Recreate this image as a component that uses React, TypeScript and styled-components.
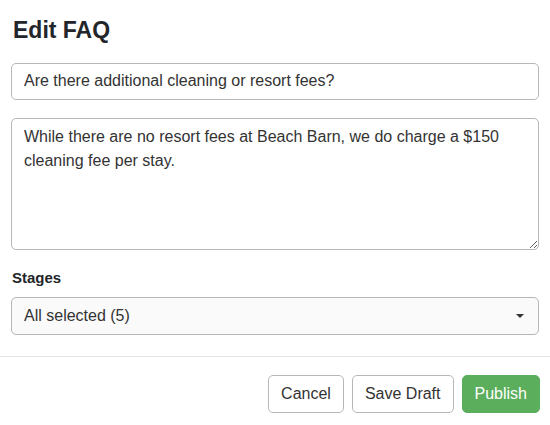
import styled, { createGlobalStyle } from "styled-components";

const GlobalStyle = createGlobalStyle`
    html, body {
        margin: 0;
        padding: 0;
        background: #ffffff;
        font-family: "Liberation Sans", Arial, sans-serif;
        color: #333333;
    }
    * {
        box-sizing: border-box;
    }
`

const Modal = styled.div`
    width: 550px;
    height: 425px;
    background: #ffffff;
    display: flex;
    flex-direction: column;
`

const Content = styled.div`
    padding: 17px 11px 0 11px;
    display: flex;
    flex-direction: column;
`

const Title = styled.h2`
    margin: 0 0 18px 2px;
    font-size: 23px;
    line-height: 1.2;
    font-weight: 700;
    color: #222529;
`

const TextInput = styled.input`
    width: 100%;
    height: 37px;
    padding: 0 12px;
    border: 1px solid #b3b8bd;
    border-radius: 5px;
    font-family: inherit;
    font-size: 16px;
    color: #333333;
    background: #ffffff;
    outline: none;
`

const TextArea = styled.textarea`
    width: 100%;
    height: 132px;
    margin-top: 18px;
    padding: 6px 12px;
    border: 1px solid #b3b8bd;
    border-radius: 5px;
    font-family: inherit;
    font-size: 16px;
    line-height: 24px;
    color: #333333;
    background: #ffffff;
    resize: vertical;
    outline: none;
`

const Label = styled.label`
    display: block;
    margin: 16px 0 0 1px;
    font-size: 15px;
    line-height: 24px;
    font-weight: 700;
    color: #222529;
`

const Select = styled.div`
    margin-top: 7px;
    height: 38px;
    padding: 0 14px 0 12px;
    border: 1px solid #b3b8bd;
    border-radius: 5px;
    background: #fafafa;
    display: flex;
    align-items: center;
    justify-content: space-between;
    font-size: 16px;
    color: #333333;
`

const Caret = styled.span`
    width: 0;
    height: 0;
    border-left: 4px solid transparent;
    border-right: 4px solid transparent;
    border-top: 4px solid #333333;
`

const Footer = styled.div`
    margin-top: 21px;
    border-top: 1px solid #e3e3e3;
    padding: 18px 10px 0 0;
    display: flex;
    justify-content: flex-end;
    gap: 8px;
`

const Button = styled.button<{ $primary?: boolean }>`
    height: 38px;
    padding: 0 12px;
    border-radius: 5px;
    font-family: inherit;
    font-size: 16px;
    cursor: pointer;
    border: 1px solid ${props => props.$primary ? '#5aae5c' : '#b3b8bd'};
    background: ${props => props.$primary ? '#5aae5c' : '#ffffff'};
    color: ${props => props.$primary ? '#ffffff' : '#333333'};
`

const App = () => {
    return (
        <>
            <GlobalStyle />
            <Modal>
                <Content>
                    <Title>Edit FAQ</Title>
                    <TextInput defaultValue="Are there additional cleaning or resort fees?" />
                    <TextArea defaultValue="While there are no resort fees at Beach Barn, we do charge a $150 cleaning fee per stay." />
                    <Label>Stages</Label>
                    <Select>
                        <span>All selected (5)</span>
                        <Caret />
                    </Select>
                </Content>
                <Footer>
                    <Button>Cancel</Button>
                    <Button>Save Draft</Button>
                    <Button $primary>Publish</Button>
                </Footer>
            </Modal>
        </>
    )
}

export default App;
